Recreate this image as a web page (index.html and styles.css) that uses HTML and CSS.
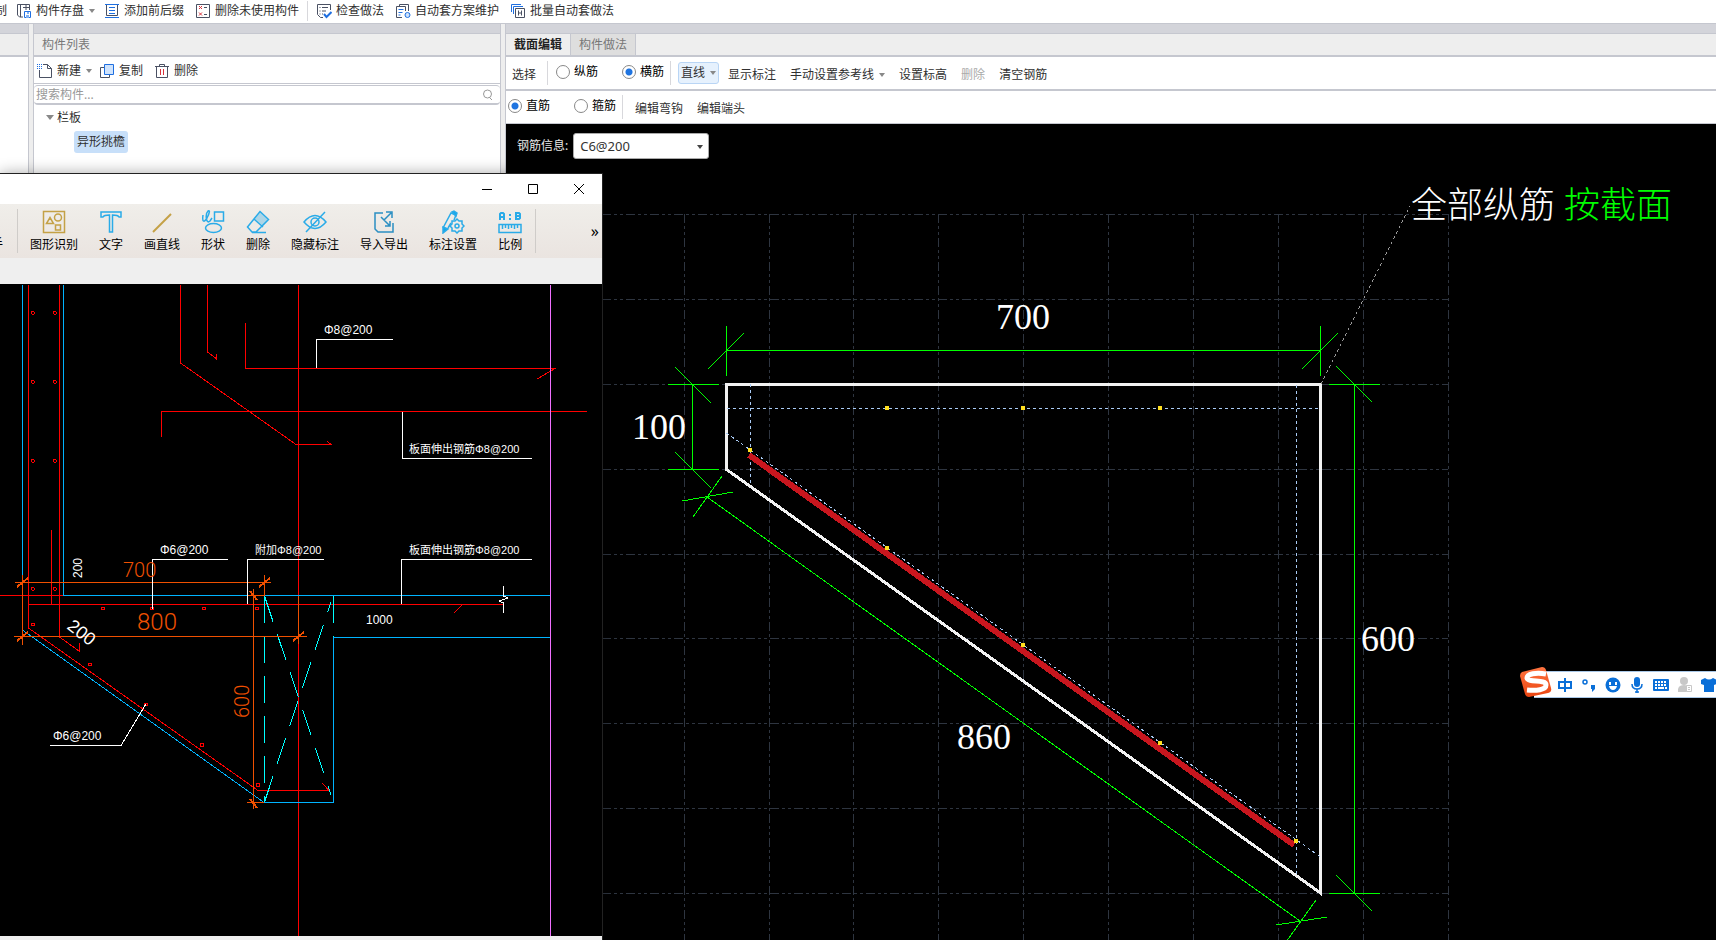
FILE: index.html
```
<!DOCTYPE html>
<html lang="zh-CN">
<head>
<meta charset="utf-8">
<title>截面编辑</title>
<link rel="stylesheet" href="styles.css">
</head>
<body>
<div class="app">
  <header class="mainbar">
    <button class="tool cut">制</button>
    <button class="tool save"><svg class="ico" viewBox="0 0 16 16"><path class="k" d="M7 14H3.500L1.500 12V1.500h12V7M4.500 14V2M7 4.500h6.500M10 2v5"/><path class="b" d="M8.500 8.500h6v6h-6z"/><path class="bf" d="M10 12h3v3h-3zM11 9h2v2h-2z"/></svg>构件存盘<span class="arrow"></span></button>
    <button class="tool add"><svg class="ico" viewBox="0 0 16 16"><path class="k" d="M2.500 1v11.500h11V1"/><path class="b" d="M1 1.500h14M5 4.500h6M5 7.500h6M5 10.500h6M1 14.500h14"/></svg>添加前后缀</button>
    <button class="tool"><svg class="ico" viewBox="0 0 16 16"><path class="k" d="M1.500 1.500h13v13h-13zM9 4.500h3M9 11.500h3"/><path class="r" d="M4 3l3 3M7 3L4 6M4 9.500l3 3M7 9.500l-3 3"/></svg>删除未使用构件</button>
    <i class="sep short"></i>
    <button class="tool"><svg class="ico" viewBox="0 0 16 16"><path class="k" d="M14.500 7V1.500h-13v10l3 3H7M3.500 4.500h1M6 4.500h6M3.500 8h1M6 8h4M3.500 11h1M6 11h1"/><path class="b" stroke-width="2" d="M8 11l2.500 3 5-5"/></svg>检查做法</button>
    <button class="tool"><svg class="ico" viewBox="0 0 16 16"><path class="k" d="M4.500 3V1.500h9V8M7 14.500H1.500v-11h9V8"/><path class="b" d="M3.500 6.500h5M3.500 9.500h4M3.500 12h2"/><circle class="bl" cx="12.500" cy="12" r="2.500"/></svg>自动套方案维护</button>
    <button class="tool"><svg class="ico" viewBox="0 0 16 16"><path class="b" d="M1.500 9V1.500H11M3.500 11V3.500H13"/><path class="k" d="M5.500 5.500h9v9h-9zM8.500 7.500v5M11.500 7.500v5M8.500 10h3"/></svg>批量自动套做法</button>
  </header>

  <div class="columns">
    <aside class="panel stub"><div class="band"></div><div class="phead"></div></aside>

    <section class="panel list">
      <div class="band"></div>
      <h2 class="phead">构件列表</h2>
      <div class="ptools">
        <button class="tool"><svg class="ico" viewBox="0 0 16 16"><path class="k" d="M6 1.500h4.500l4 4v9h-12V7M10.500 1.500v4h4"/><path class="b" stroke-dasharray="1 1" d="M0 1.500h5M0 3.500h5M0 5.500h5"/></svg>新建<span class="arrow"></span></button>
        <button class="tool"><svg class="ico" viewBox="0 0 16 16"><path class="k" d="M5 4.500H1.500v10h9V11"/><path class="bl" d="M5.500 1.500h9v10h-9z"/></svg>复制</button>
        <button class="tool"><svg class="ico" viewBox="0 0 16 16"><path class="k" d="M1 3.500h14M5.500 3V1.500h5V3M2.500 4v10.500h11V4"/><path class="r" d="M6.500 6v6M9.500 6v6"/></svg>删除</button>
      </div>
      <div class="search"><input type="text" aria-label="搜索构件" placeholder="搜索构件..."><svg class="lens" viewBox="0 0 12 12"><circle cx="5.500" cy="5" r="4"/><path d="M7 8l3 3"/></svg></div>
      <ul class="tree">
        <li><span class="twist"></span>栏板
          <ul><li><span class="picked">异形挑檐</span></li></ul>
        </li>
      </ul>
    </section>

    <main class="panel editor">
      <div class="band"></div>
      <nav class="tabs"><button class="tab on">截面编辑</button><button class="tab">构件做法</button></nav>
      <div class="row">
        <button class="tool low">选择</button><i class="sep"></i>
        <label class="radio"><input type="radio" name="dir">纵筋</label>
        <label class="radio second"><input type="radio" name="dir" checked>横筋</label><i class="sep near"></i>
        <button class="tool line">直线<span class="arrow"></span></button>
        <span class="cmds"><button class="tool low">显示标注</button>
        <button class="tool low">手动设置参考线<span class="arrow"></span></button>
        <button class="tool low">设置标高</button>
        <button class="tool low" disabled>删除</button>
        <button class="tool low">清空钢筋</button></span>
      </div>
      <div class="row sub">
        <label class="radio"><input type="radio" name="kind" checked>直筋</label>
        <label class="radio third"><input type="radio" name="kind">箍筋</label><i class="sep near"></i>
        <span class="cmds"><button class="tool low">编辑弯钩</button><button class="tool low">编辑端头</button></span>
      </div>
      <div class="canvas">
        <svg class="drawing" aria-label="截面图">
          <g transform="translate(-506 -124)">
            <path class="grid" d="M602 214.500H1448M602 299.500H1448M602 384.500H1448M602 469.500H1448M602 554.500H1448M602 638.500H1448M602 723.500H1448M602 808.500H1448M602 893.500H1448M684.500 214V940M769.500 214V940M853.500 214V940M938.500 214V940M1023.500 214V940M1108.500 214V940M1193.500 214V940M1278.500 214V940M1363.500 214V940M1448.500 214V940"/>
            <path class="outline" d="M726.500 384.500H1320.500V893L726.500 469.500Z"/>
            <path class="guide" d="M727 408.500H1321M750.500 384V486M1296.500 385V877M726.500 433L1320.500 857"/>
            <path class="leader" d="M1321 384L1410 206"/>
            <path class="bar" d="M749 455L1294 845"/>
            <path class="dots" d="M885 406h4v4h-4zM1021 406h4v4h-4zM1158 406h4v4h-4zM748 448h4v4h-4zM885 546h4v4h-4zM1021 643h4v4h-4zM1158 741h4v4h-4zM1294 839h4v4h-4z"/>
            <path class="dim" d="M726 350.500H1320M726.500 326V376M708 369L744 333M1320.500 326V376M1302 369L1338 333M692.500 384V469M668 384.500H719M668 469.500H719M675 367L711 403M675 452L711 488M1354.500 384V893M1329 384.500H1380M1329 893.500H1380M1336 366L1372 402M1336 875L1372 911M707 497L1300 921M682 501L733 492M693 517L722 476M1276 925L1327 917M1316 900L1286 942"/>
            <g class="dimtext"><text x="996" y="329">700</text><text x="632" y="439">100</text><text x="1361" y="651">600</text><text x="957" y="749">860</text>
            <text class="cjk" x="1411" y="218">全部纵筋</text><text class="cjk green" x="1564" y="218">按截面</text></g>
          </g>
        </svg>
        <form class="info"><label for="bar">钢筋信息:</label><span class="pick"><select id="bar"><option>C6@200</option></select></span></form>
      </div>
    </main>
  </div>

  <section class="window">
    <div class="title">
      <button aria-label="最小化"><svg viewBox="0 0 12 12"><path d="M1 6.500h10"/></svg></button>
      <button aria-label="最大化"><svg viewBox="0 0 12 12"><path d="M1.500 1.500h9v9h-9z"/></svg></button>
      <button aria-label="关闭"><svg viewBox="0 0 12 12"><path d="M1 1l10 10M11 1L1 11"/></svg></button>
    </div>
    <div class="ribbon">
      <span class="clipped">手</span><i class="vr"></i>
      <div class="acts">
        <button class="act"><svg viewBox="0 0 24 24"><g stroke="#c4a146"><path d="M1.500 1.500h21v21h-21zM4.500 13.500L8 7.500l3.500 6zM13.500 15h5v5h-5z"/><circle cx="16" cy="7.500" r="3.500"/></g></svg>图形识别</button>
        <button class="act"><svg viewBox="0 0 24 24"><path d="M2 2h20v5h-2c-1-2-3-2-6.500-2v17h-3V5C7 5 5 5 4 7H2z"/></svg>文字</button>
        <button class="act"><svg viewBox="0 0 24 24"><path stroke="#c4a146" stroke-width="2" d="M3 22L21 4"/></svg>画直线</button>
        <button class="act"><svg viewBox="0 0 24 24"><path d="M13.500 2h9v9h-9zM2 5c-1 7 1 8 4 3 3-6 3-8 1-7-3 3-2 14 2 10l2-3"/><ellipse cx="12.500" cy="18" rx="8" ry="4.500"/></svg>形状</button>
        <button class="act"><svg viewBox="0 0 24 24"><path d="M14 1.500l8.500 8L10 22H6L1.500 17zM8 9l9 8M6 22.500h14"/><path fill="#2aabe855" stroke="none" d="M14 2l8 8-5 6-8-7z"/></svg>删除</button>
        <button class="act"><svg viewBox="0 0 24 24"><path d="M1 12Q12-1 23 12 12 25 1 12zM3 22L22 2"/><circle cx="12" cy="12" r="4"/></svg>隐藏标注</button>
        <button class="act"><svg viewBox="0 0 24 24"><g stroke="#2b8fc2"><path d="M11 3H3v16l3 3h15V13M9 7l9 9M14 2h6v6M19 3l-7 7M18 11v5h-5"/></g></svg>导入导出</button>
        <button class="act"><svg viewBox="0 0 24 24"><path d="M2 18L10 3l5 2-2 5M7 18l3-5"/><path fill="#12a7ef" d="M2 17l5 2-5 4zM11 2l2-1 3 2-1 3z"/><path d="M16 9l2 2 3 0 0 3 2 2-2 2 0 3-3 0-2 2-2-2-3 0 0-3-2-2 2-2 0-3 3 0z"/><circle cx="16" cy="16" r="2"/></svg>标注设置</button>
        <button class="act"><svg viewBox="0 0 24 24"><path stroke-width="2" d="M2 10V4l1-1h2l1 1v6M2 7h4M18 3v6h3l1-1V4l-1-1zM18 6h4M12 4v2M12 8v2"/><path d="M1 14.500h22v8H1zM4.500 15v4M7.500 15v3M10.500 15v4M13.500 15v3M16.500 15v4M19.500 15v3"/></svg>比例</button>
      </div>
      <i class="vr"></i><button class="more" aria-label="更多">»</button>
    </div>
    <div class="strip"></div>
    <div class="cad">
      <svg class="drawing" aria-label="图纸">
        <g transform="translate(0 -284)">
          <path class="red" d="M28.500 285V628L258 790.500H329L322 783M59.500 285V637L79 651V643M51.500 530V604M0 595.500H63M28 604.500H503M298.500 285V936M180.500 285V363L296 444.500H331L327 441M207.500 285V352L216 358.500V354M245.500 323V368.500H555L537 379M161.500 437V411.500H587M454 613L462 605"/>
          <path class="red" d="M31 312l2-1 2 2-2 2-2-2zM53 312l2-1 2 2-2 2-2-2zM31 381l2-1 2 2-2 2-2-2zM53 381l2-1 2 2-2 2-2-2zM31 460l2-1 2 2-2 2-2-2zM53 460l2-1 2 2-2 2-2-2zM31 588l2-1 2 2-2 2-2-2zM53 588l2-1 2 2-2 2-2-2zM101 607h3v2h-3zM150 607h3v2h-3zM202 607h3v2h-3zM255 607h3v2h-3zM31 623h3v2h-3zM88 663h3v2h-3zM144 703h3v2h-3zM200 743h3v3h-3zM256 783h3v3h-3z"/>
          <path class="blue" d="M22.500 285V577M63.500 285V595.500H550M22.500 630L264 802.500H333.500V637.500H550"/>
          <path class="cyan" d="M264.500 596V802M264.500 596L331 795M264.500 802L331 602M333.500 596V637"/>
          <path class="orange" d="M15 582.500H271M22.500 575V645M264.500 575V596M14 636.500H307M298.500 596V644M253.500 589V809M247 595.500H264M247 802.500H264"/>
          <path class="tick" d="M17 587L28 578M259 587L270 578M17 641L28 632M293 641L304 632M250 591L257 600M250 799L257 808"/>
          <path class="violet" d="M550.500 285V936"/>
          <path class="white" d="M316.500 368V339.500H393M402.500 412V458.500H532M401.500 604V559.500H532M152.500 609V559.500H228M247.500 604V559.500H324M50 745.500H121L146 704M503.500 586V596L508 598 499 601 503.500 603V613"/>
          <g class="note"><text x="324" y="334">Φ8@200</text><text x="160" y="554">Φ6@200</text><text x="53" y="740">Φ6@200</text>
          <text x="409" y="453" class="mix">板面伸出钢筋Φ8@200</text><text x="409" y="554" class="mix">板面伸出钢筋Φ8@200</text><text x="255" y="554" class="mix">附加Φ8@200</text>
          <text x="366" y="624">1000</text><text transform="translate(82 578) rotate(-90)">200</text><text class="wide" transform="translate(66 628) rotate(38)">200</text></g>
          <g class="measure"><text x="123" y="577">700</text><text class="big" x="137" y="630">800</text><text transform="translate(249 718) rotate(-90)">600</text></g>
        </g>
      </svg>
    </div>
    <div class="foot"></div>
  </section>

  <div class="ime">
    <svg class="logo" viewBox="0 0 32 30"><defs><linearGradient id="lg" x2="0" y2="1"><stop stop-color="#ff7440"/><stop offset="1" stop-color="#ea4410"/></linearGradient></defs><path fill="url(#lg)" d="M2 5L22 0q3 0 4 3l5 18q1 4-3 5L9 30q-3 0-4-3L0 9q0-3 2-4z"/><path fill="none" stroke="#fff" stroke-width="5" d="M26 7C16 5 7 7 7 11c1 5 19 1 19 7 0 5-10 6-19 5"/></svg>
    <button class="zh" aria-label="中英文"><svg viewBox="0 0 16 16"><path fill="none" stroke="#0a6fd8" stroke-width="2" d="M2 5h12v6H2zM8 1v14"/></svg></button>
    <button aria-label="标点"><svg viewBox="0 0 16 16"><circle cx="4" cy="5" r="2" fill="none" stroke="#0a6fd8" stroke-width="1.500"/><path fill="#0a6fd8" d="M10 8h4v4l-3 3v-3h-1z"/></svg></button>
    <button aria-label="表情"><svg viewBox="0 0 16 16"><circle cx="8" cy="8" r="7.500" fill="#0a6fd8"/><path fill="#fff" d="M4 5h2v3H4zM10 5h2v3h-2zM4 9h8q-1 4-4 4T4 9z"/></svg></button>
    <button aria-label="语音"><svg viewBox="0 0 16 16"><rect x="5" y="0" width="6" height="10" rx="3" fill="#0a6fd8"/><path fill="none" stroke="#0a6fd8" stroke-width="1.500" d="M3 7q0 5 5 5t5-5M8 12v4M6 15h4"/></svg></button>
    <button aria-label="键盘"><svg viewBox="0 0 16 16"><rect y="2" width="16" height="12" rx="1" fill="#0a6fd8"/><path stroke="#fff" stroke-width="2" stroke-dasharray="2 1" d="M2 5h12M2 8h12"/><path stroke="#fff" stroke-width="2" d="M2 11h2M5 11h6M12 11h2"/></svg></button>
    <button aria-label="用户"><svg viewBox="0 0 16 16"><circle cx="7" cy="4" r="4" fill="#c8c8c8"/><path fill="#c8c8c8" d="M1 15q-1-7 6-7t7 7z"/><path fill="#fff" stroke="#c8c8c8" d="M9.500 8.500h5v6h-5zM11 10.500h2M11 12.500h2"/></svg></button>
    <button aria-label="皮肤"><svg viewBox="0 0 16 16"><path fill="#0a6fd8" d="M4 1q4 3 8 0l4 2v4l-3 1v7H3V8L0 7V3z"/></svg></button>
  </div>
</div>
</body>
</html>
```
FILE: styles.css
```
* { box-sizing: border-box; }
body { margin: 0; font: 12px/16px "Noto Sans", "Noto Sans CJK SC", sans-serif; color: #303030; }
button { border: 0; padding: 0; background: none; font: inherit; color: inherit; white-space: nowrap; }
h2, ul { margin: 0; padding: 0; font: inherit; list-style: none; }
.app { position: relative; display: flex; flex-direction: column; height: 100vh; overflow: hidden; background: #eee; }

.mainbar { display: flex; align-items: center; gap: 11px; height: 24px; padding-bottom: 1px; background: #fff; border-bottom: 1px solid #c5c7cf; }
.tool { display: inline-flex; align-items: center; gap: 4px; }
.tool:disabled { color: #aaa; }
.cut { margin: 0 -2px 0 -5px; }
.save { margin-right: -2px; }
.ico { width: 16px; height: 16px; fill: none; }
.k { stroke: #4a5163; }
.b { stroke: #1f6fe0; }
.bf { fill: #7fb1f5; }
.bl { fill: #cfe3fc; stroke: #1f6fe0; }
.r { stroke: #d8303a; }
.arrow { border: 3px solid transparent; border-top: 4px solid #888; border-bottom: 0; margin-left: 1px; }
.sep { width: 1px; height: 24px; background: #d8d8dc; }
.sep.short { height: 20px; margin: 0 -3px; }

.columns { flex: 1; min-height: 0; display: grid; grid-template-columns: 29px 468px 1fr; gap: 4px; }
.panel { display: flex; flex-direction: column; min-width: 0; background: #fff; border: solid #c5c7cf; border-width: 0 1px; }
.stub { border-left: 0; }
.editor { border-right: 0; }
.band { height: 10px; background: #d3d4da; border-bottom: 1px solid #c5c7cf; }
.phead { height: 23px; padding: 3px 8px; background: #eee; border-bottom: 2px solid #c5c7cf; color: #777; }
.ptools { display: flex; align-items: center; gap: 11px; height: 27px; padding: 2px 3px 0; border-bottom: 1px solid #c5c7cf; }
.ptools .tool:first-child { margin-right: -4px; }
.search { display: flex; align-items: center; height: 20px; margin-top: 1px; border: 1px solid #c5c7cf; border-width: 1px 0 2px; border-radius: 4px; }
.search input { flex: 1; border: 0; padding: 0 2px; outline: 0; background: none; font: inherit; }
.search input::placeholder { color: #999; }
.lens { width: 12px; height: 12px; margin-right: 6px; fill: none; stroke: #999; }
.tree { padding: 4px 12px; line-height: 18px; }
.tree ul { padding: 4px 28px; }
.twist { display: inline-block; border: 4px solid transparent; border-top: 5px solid #888; border-bottom: 0; margin: 0 3px 2px 0; }
.picked { display: inline-block; padding: 2px 3px; border-radius: 3px; background: #c7dff9; }

.tabs { display: flex; height: 23px; background: #eee; border-bottom: 2px solid #c5c7cf; }
.tab { padding: 1px 8px 0; background: #dedede; color: #777; border-right: 1px solid #c5c7cf; }
.tab.on { background: #eee; color: #222; font-weight: 700; }
.row { display: flex; align-items: center; height: 34px; padding: 0 6px; border-bottom: 2px solid #c5c7cf; }
.row .sep { margin: 0 8px 0 11px; }
.row .sep.near { margin: 0 7px 0 6px; }
.row.sub { height: 33px; padding: 0 2px; border-bottom-width: 1px; }
.low { padding-top: 3px; }
.radio { display: flex; align-items: center; gap: 4px; color: #000; padding-bottom: 2px; }
.radio input { appearance: none; width: 14px; height: 14px; margin: 0; border: 1px solid #888; border-radius: 50%; background: #fff; }
.radio input:checked { background: radial-gradient(circle, #1f74e0 3px, #fff 4px); }
.second { margin-left: 24px; }
.third { margin-left: 24px; }
.line { height: 22px; padding: 0 2px; gap: 1px; border: 1px solid #b9d5f5; border-radius: 3px; background: #e6f1fd; }
.line .arrow { margin-left: 4px; }
.cmds { display: flex; gap: 14px; margin-left: 9px; }
.sub .cmds { margin-left: 5px; }

.canvas { position: relative; flex: 1; min-height: 0; background: #000; }
.drawing { display: block; width: 100%; height: 100%; fill: none; shape-rendering: crispEdges; }
.info { position: absolute; top: 9px; left: 11px; display: flex; align-items: center; gap: 5px; color: #e8e8e8; }
.pick { position: relative; }
.pick::after { content: ""; position: absolute; right: 6px; top: 12px; border: 3px solid transparent; border-top: 4px solid #444; border-bottom: 0; }
.info select { appearance: none; width: 136px; height: 26px; padding: 0 6px; border: 1px solid #aaa; border-radius: 3px; background: #fff; color: #333; font: 13px "Noto Sans", sans-serif; }
.grid { stroke: #2e3540; stroke-dasharray: 9 3 3 3 3 3; }
.outline { stroke: #f2f2f2; stroke-width: 3; }
.guide { stroke: #a9cbf5; stroke-dasharray: 3 3; }
.leader { stroke: #999; stroke-dasharray: 3 3; }
.bar { stroke: #c8161e; stroke-width: 6; }
.dots { fill: #ffdf20; }
.dim { stroke: #0f0; }
.dimtext { fill: #fff; font: 36px "Liberation Serif", serif; }
.dimtext .cjk { font-family: "Noto Sans CJK SC", sans-serif; font-weight: 300; }
.dimtext .green { fill: #0f0; }

.window { position: absolute; left: 0; top: 173px; bottom: 0; width: 603px; display: flex; flex-direction: column; background: #efefef; border: solid #222; border-width: 1px 1px 0 0; box-shadow: 0 0 14px #0005; }
.title { display: flex; justify-content: flex-end; gap: 34px; height: 30px; padding: 0 17px; background: #fff; }
.title svg { display: block; width: 12px; height: 12px; fill: none; stroke: #000; }
.ribbon { display: flex; align-items: center; height: 54px; background: linear-gradient(#f0eeea, #eae4e0); color: #000; }
.clipped { width: 3px; margin-right: 14px; padding-top: 26px; direction: rtl; overflow: hidden; }
.vr { width: 1px; height: 44px; background: #cfccc9; }
.acts { display: flex; gap: 21px; padding: 0 13px 0 12px; }
.act { display: flex; flex-direction: column; align-items: center; gap: 3px; }
.act svg { width: 24px; height: 24px; fill: none; stroke: #2aabe8; stroke-width: 1.5; }
.more { margin: 0 3px 0 auto; font-size: 16px; }
.strip { height: 26px; }
.cad { flex: 1; min-height: 0; background: #000; }
.foot { height: 4px; }
.red { stroke: #f00; }
.blue { stroke: #00b4ff; }
.cyan { stroke: #0ff; stroke-dasharray: 27 13; }
.orange { stroke: #f05000; }
.tick { stroke: #f05000; stroke-width: 2; }
.violet { stroke: #f070ff; }
.white { stroke: #fff; }
.note { fill: #fff; font: 12px "Liberation Sans", "Noto Sans CJK SC", sans-serif; }
.note .mix { font-size: 11px; }
.note .wide { font-size: 18px; }
.measure { fill: #f05000; font: 300 20px Roboto, sans-serif; }
.measure .big { font-size: 24px; }

.ime { position: absolute; right: 0; top: 671px; display: flex; align-items: center; gap: 8px; height: 27px; width: 182px; background: #fff; border: 1px solid #a9c8e8; border-width: 1px 0; }
.ime svg { display: block; width: 16px; height: 16px; }
.ime .logo { flex: none; width: 32px; height: 30px; margin: -5px -2px 0 -14px; }
.ime .zh { margin-left: -1px; }
```
